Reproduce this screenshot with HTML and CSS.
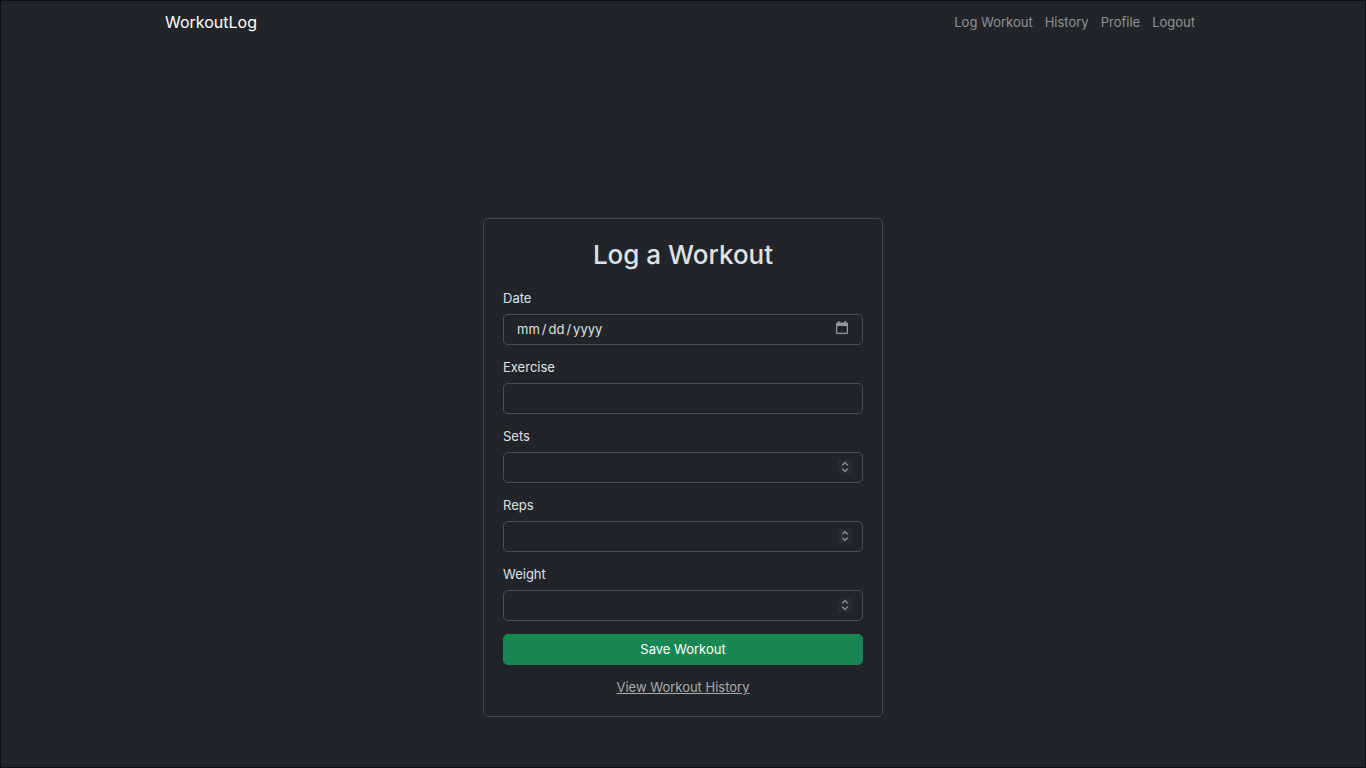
FILE: index.html
```html
<!DOCTYPE html>
<html lang="en">
<head>
<meta charset="utf-8">
<meta name="viewport" content="width=device-width, initial-scale=1">
<title>WorkoutLog</title>
<link rel="stylesheet" href="styles.css">
</head>
<body>
<svg class="symbols" aria-hidden="true">
  <symbol id="updown" viewBox="0 0 14 14">
    <path d="M4.300 5.200 7 2.600l2.700 2.600M4.300 8.800 7 11.400l2.700-2.600" fill="none" stroke="currentColor" stroke-width="1.300"/>
  </symbol>
</svg>
<header class="navbar">
  <div class="container">
    <a class="brand" href="#">WorkoutLog</a>
    <nav class="nav">
      <a href="#">Log Workout</a>
      <a href="#">History</a>
      <a href="#">Profile</a>
      <a href="#">Logout</a>
    </nav>
  </div>
</header>
<main class="main">
  <form class="card">
    <h1 class="title">Log a Workout</h1>
    <div class="field">
      <label for="date">Date</label>
      <div class="control">
        <input class="input" id="date" type="date">
        <svg class="calendar" viewBox="0 0 12 13" aria-hidden="true">
          <path d="M2 0h1.500v1.500h5V0H10v1.500h1A1 1 0 0 1 12 2.500V12a1 1 0 0 1-1 1H1a1 1 0 0 1-1-1V2.500a1 1 0 0 1 1-1h1zM1.200 5v6.300a.5.5 0 0 0 .5.500h8.600a.5.5 0 0 0 .5-.5V5z" fill="currentColor"/>
        </svg>
      </div>
    </div>
    <div class="field">
      <label for="exercise">Exercise</label>
      <input class="input" id="exercise" type="text">
    </div>
    <div class="field">
      <label for="sets">Sets</label>
      <div class="control">
        <input class="input" id="sets" type="number">
        <svg class="stepper" aria-hidden="true"><use href="#updown"/></svg>
      </div>
    </div>
    <div class="field">
      <label for="reps">Reps</label>
      <div class="control">
        <input class="input" id="reps" type="number">
        <svg class="stepper" aria-hidden="true"><use href="#updown"/></svg>
      </div>
    </div>
    <div class="field">
      <label for="weight">Weight</label>
      <div class="control">
        <input class="input" id="weight" type="number">
        <svg class="stepper" aria-hidden="true"><use href="#updown"/></svg>
      </div>
    </div>
    <button class="button" type="submit">Save Workout</button>
    <a class="history" href="#">View Workout History</a>
  </form>
</main>
</body>
</html>
```
FILE: styles.css
```css
* {
  box-sizing: border-box;
}

body {
  display: flex;
  flex-direction: column;
  min-height: 100vh;
  margin: 0;
  border: 1px solid #0e1012;
  background: #212529;
  color: #dee2e6;
  font: 13px/19px Inter, sans-serif;
}

.symbols {
  position: absolute;
  width: 0;
  height: 0;
}

.container {
  display: flex;
  align-items: center;
  justify-content: space-between;
  max-width: 1056px;
  margin: 0 auto;
  padding: 9px 10px;
}

.brand {
  color: #fff;
  font-size: 16px;
  line-height: 24px;
  text-decoration: none;
}

.nav {
  display: flex;
  gap: 12px;
  padding-right: 6px;
}

.nav a {
  color: #909294;
  text-decoration: none;
}

.main {
  display: flex;
  flex: 1;
  align-items: center;
  justify-content: center;
  padding-top: 125px;
}

.card {
  display: flex;
  flex-direction: column;
  gap: 13px;
  width: 100%;
  max-width: 400px;
  padding: 20px 19px 19px;
  border: 1px solid #43474b;
  border-radius: 5px;
}

.title {
  margin: 0 0 6px;
  font-size: 26px;
  font-weight: 500;
  line-height: 31px;
  text-align: center;
}

.field {
  display: flex;
  flex-direction: column;
  gap: 6px;
}

.control {
  display: flex;
  position: relative;
}

.input {
  width: 100%;
  height: 31px;
  padding: 5px 10px 5px 12px;
  border: 1px solid #495057;
  border-radius: 5px;
  background: transparent;
  color: inherit;
  font: inherit;
  color-scheme: dark;
}

.input::-webkit-datetime-edit-fields-wrapper {
  padding: 0;
}

.input::-webkit-datetime-edit-text {
  padding: 0 1px;
}

.input::-webkit-calendar-picker-indicator {
  opacity: 0;
}

.input::-webkit-inner-spin-button {
  opacity: 0;
}

.calendar {
  position: absolute;
  top: 7px;
  right: 15px;
  width: 12px;
  height: 13px;
  color: #96989b;
  pointer-events: none;
}

.stepper {
  position: absolute;
  top: 8px;
  right: 11px;
  width: 14px;
  height: 14px;
  background: #2b2a33;
  color: #97979e;
  pointer-events: none;
}

.button {
  padding: 5px 10px;
  border: 1px solid #198754;
  border-radius: 5px;
  background: #198754;
  color: #fff;
  font: inherit;
}

.history {
  align-self: center;
  color: #a7acb1;
}
```
